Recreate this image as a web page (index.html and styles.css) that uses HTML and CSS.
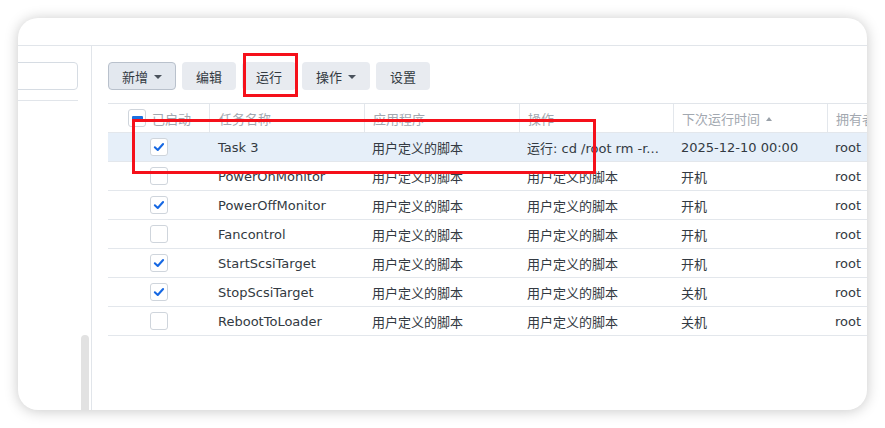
FILE: index.html
```html
<!DOCTYPE html>
<html lang="zh-CN">
<head>
<meta charset="utf-8">
<title>任务计划</title>
<link rel="stylesheet" href="styles.css">
</head>
<body>
<div class="card">
  <div class="topbar"></div>
  <div class="body">
    <aside class="sidebar">
      <div class="search"></div>
      <div class="side-line"></div>
      <div class="scrollbar"></div>
    </aside>
    <main class="main">
      <div class="toolbar">
        <button class="btn btn-primary">新增<span class="caret"></span></button>
        <button class="btn">编辑</button>
        <button class="btn">运行</button>
        <button class="btn">操作<span class="caret"></span></button>
        <button class="btn">设置</button>
      </div>
      <div class="grid">
        <div class="row head">
          <div class="cell c-check"><span class="box box-head"><span class="indet"></span></span>已启动</div>
          <div class="cell sep">任务名称</div>
          <div class="cell sep">应用程序</div>
          <div class="cell sep">操作</div>
          <div class="cell sep">下次运行时间<span class="sort"></span></div>
          <div class="cell sep">拥有者</div>
        </div>
        <div class="row selected">
          <div class="cell c-check"><span class="box"><svg viewBox="0 0 18 18" class="tick"><path d="M4.3 9.3 L7.6 12.4 L13.6 5.6"/></svg></span></div>
          <div class="cell">Task 3</div>
          <div class="cell">用户定义的脚本</div>
          <div class="cell">运行: cd /root rm -r...</div>
          <div class="cell">2025-12-10 00:00</div>
          <div class="cell">root</div>
        </div>
        <div class="row">
          <div class="cell c-check"><span class="box"></span></div>
          <div class="cell">PowerOnMonitor</div>
          <div class="cell">用户定义的脚本</div>
          <div class="cell">用户定义的脚本</div>
          <div class="cell">开机</div>
          <div class="cell">root</div>
        </div>
        <div class="row">
          <div class="cell c-check"><span class="box"><svg viewBox="0 0 18 18" class="tick"><path d="M4.3 9.3 L7.6 12.4 L13.6 5.6"/></svg></span></div>
          <div class="cell">PowerOffMonitor</div>
          <div class="cell">用户定义的脚本</div>
          <div class="cell">用户定义的脚本</div>
          <div class="cell">开机</div>
          <div class="cell">root</div>
        </div>
        <div class="row">
          <div class="cell c-check"><span class="box"></span></div>
          <div class="cell">Fancontrol</div>
          <div class="cell">用户定义的脚本</div>
          <div class="cell">用户定义的脚本</div>
          <div class="cell">开机</div>
          <div class="cell">root</div>
        </div>
        <div class="row">
          <div class="cell c-check"><span class="box"><svg viewBox="0 0 18 18" class="tick"><path d="M4.3 9.3 L7.6 12.4 L13.6 5.6"/></svg></span></div>
          <div class="cell">StartScsiTarget</div>
          <div class="cell">用户定义的脚本</div>
          <div class="cell">用户定义的脚本</div>
          <div class="cell">开机</div>
          <div class="cell">root</div>
        </div>
        <div class="row">
          <div class="cell c-check"><span class="box"><svg viewBox="0 0 18 18" class="tick"><path d="M4.3 9.3 L7.6 12.4 L13.6 5.6"/></svg></span></div>
          <div class="cell">StopScsiTarget</div>
          <div class="cell">用户定义的脚本</div>
          <div class="cell">用户定义的脚本</div>
          <div class="cell">关机</div>
          <div class="cell">root</div>
        </div>
        <div class="row">
          <div class="cell c-check"><span class="box"></span></div>
          <div class="cell">RebootToLoader</div>
          <div class="cell">用户定义的脚本</div>
          <div class="cell">用户定义的脚本</div>
          <div class="cell">关机</div>
          <div class="cell">root</div>
        </div>
      </div>
    </main>
  </div>
</div>
<div class="mark mark-run"></div>
<div class="mark mark-row"></div>
</body>
</html>
```

FILE: styles.css
```css
* { box-sizing: border-box; }
html, body { margin: 0; padding: 0; background: #ffffff; }
body {
  width: 885px;
  height: 428px;
  padding: 18px 0 0 18px;
  position: relative;
  overflow: hidden;
  font-family: "DejaVu Sans", "Noto Sans CJK SC", sans-serif;
  font-size: 13px;
  color: #333a42;
}
.card {
  width: 849px;
  height: 392px;
  background: #fff;
  border-radius: 20px;
  box-shadow: 0 1px 14px rgba(0, 0, 0, 0.22);
  overflow: hidden;
  display: flex;
  flex-direction: column;
}
.topbar {
  height: 28px;
  border-bottom: 1px solid #e1e5ea;
  flex: none;
}
.body {
  flex: 1;
  display: flex;
  min-height: 0;
}
.sidebar {
  width: 74px;
  flex: none;
  border-right: 1px solid #e1e5ea;
  padding-top: 16px;
  position: relative;
}
.search {
  margin-left: -12px;
  width: 72px;
  height: 28px;
  border: 1px solid #d6dce3;
  border-radius: 4px;
  background: #fff;
}
.side-line {
  margin-top: 10px;
  margin-left: -12px;
  width: 72px;
  border-top: 1px solid #e1e5ea;
}
.scrollbar {
  position: absolute;
  left: 63px;
  top: 289px;
  width: 8px;
  bottom: 0;
  background: #e2e2e2;
  border-radius: 4px 4px 0 0;
}
.main {
  flex: 1;
  min-width: 0;
  padding: 16px 0 0 16px;
  overflow: hidden;
}
.toolbar {
  display: flex;
  gap: 6px;
  height: 28px;
}
.btn {
  height: 28px;
  padding: 0 13px;
  border: 1px solid transparent;
  border-radius: 4px;
  background: #e8ebf0;
  font-family: "Noto Sans CJK SC", sans-serif;
  font-size: 13px;
  color: #333a42;
  display: flex;
  align-items: center;
  gap: 6px;
  cursor: pointer;
}
.btn-primary {
  background: #e3e8ef;
  border-color: #b9c1cc;
}
.caret {
  width: 0;
  height: 0;
  border-left: 4px solid transparent;
  border-right: 4px solid transparent;
  border-top: 4px solid #4a525c;
  margin-top: 1px;
}
.grid {
  margin-top: 13px;
  border-top: 1px solid #e1e5ea;
  width: 773px;
}
.row {
  display: grid;
  grid-template-columns: 101px 155px 155px 154px 154px 154px;
  height: 29px;
  border-bottom: 1px solid #e3e7ec;
  align-items: stretch;
}
.row.head {
  color: #a2a8b0;
}
.row.selected {
  background: #e6eff9;
}
.cell {
  display: flex;
  align-items: center;
  padding-left: 8px;
  white-space: nowrap;
  overflow: hidden;
  padding-top: 1px;
}
.cell.sep {
  border-left: 1px solid #e3e7ec;
}
.row > .cell:nth-child(2) {
  padding-left: 9px;
}
.c-check {
  padding-left: 42px;
  padding-top: 0;
}
.head .c-check {
  padding-left: 20px;
  gap: 6px;
}
.box {
  width: 18px;
  height: 18px;
  border: 1px solid #cfd5dc;
  border-radius: 3px;
  background: #fff;
  display: flex;
  align-items: center;
  justify-content: center;
  flex: none;
}
.indet {
  width: 11px;
  height: 4px;
  background: #1a6fe0;
  border-radius: 1px;
}
.tick {
  width: 18px;
  height: 18px;
  fill: none;
  stroke: #1668e3;
  stroke-width: 2.3;
  stroke-linecap: round;
  stroke-linejoin: round;
}
.sort {
  width: 0;
  height: 0;
  margin-left: 6px;
  border-left: 3.5px solid transparent;
  border-right: 3.5px solid transparent;
  border-bottom: 4px solid #9aa1a9;
}
.mark {
  position: absolute;
  border: 3px solid #f5101a;
  pointer-events: none;
}
.mark-run {
  left: 243px;
  top: 53px;
  width: 55px;
  height: 44px;
}
.mark-row {
  left: 132px;
  top: 119px;
  width: 464px;
  height: 55px;
}
```
